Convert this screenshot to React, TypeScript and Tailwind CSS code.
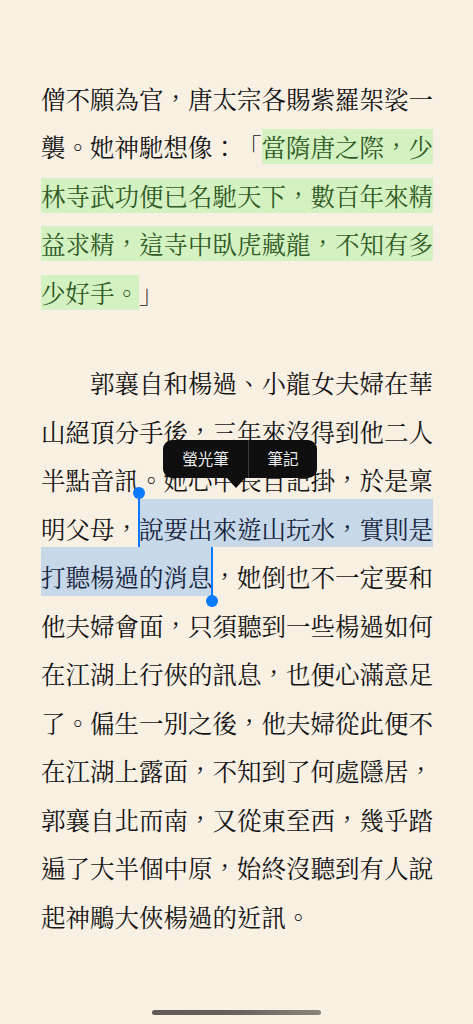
import React from "react";

const FONT = {
  fontFamily: '"Noto Serif CJK TC", "Noto Sans CJK TC", "Noto Sans CJK SC", serif',
};

function Line({ children, indent = false }: { children: React.ReactNode; indent?: boolean }) {
  return (
    <div className={"h-[48.5px] leading-[48.5px] whitespace-nowrap " + (indent ? "pl-[49px]" : "")}>
      {children}
    </div>
  );
}

function G({ children }: { children: React.ReactNode }) {
  return <span className="bg-[#d4f2c1] text-[#2f5a25]">{children}</span>;
}

export default function App() {
  return (
    <div
      lang="zh-Hant"
      className="relative w-full h-[1024px] overflow-hidden bg-[#f9f0e4] text-[#141414] text-[24.5px] [text-spacing-trim:space-all] [font-kerning:none]"
      style={FONT}
    >
      <div className="pl-[41px] pt-[74.5px] w-[433px]">
        <div>
          <Line>僧不願為官，唐太宗各賜紫羅架裟一</Line>
          <Line>
            襲。她神馳想像：「<G>當隋唐之際，少</G>
          </Line>
          <Line>
            <G>林寺武功便已名馳天下，數百年來精</G>
          </Line>
          <Line>
            <G>益求精，這寺中臥虎藏龍，不知有多</G>
          </Line>
          <Line>
            <G>少好手。</G>」
          </Line>
        </div>

        <div className="mt-[42.4px]">
          <Line indent>郭襄自和楊過、小龍女夫婦在華</Line>
          <Line>山絕頂分手後，三年來沒得到他二人</Line>
          <Line>半點音訊。她心中長自記掛，於是稟</Line>
          <Line>
            明父母，
            <span className="relative bg-[#c7d8e9] text-[#16243d] pt-[12px] pb-[1.5px]">
              說要出來遊山玩水，實則是
              <span className="absolute left-[-1.5px] top-[-5.5px] w-[2px] h-[54.5px] bg-[#0a7bff]" />
              <span className="absolute left-[-6.5px] top-[-11.5px] w-[12px] h-[12px] rounded-full bg-[#0a7bff]" />
            </span>
          </Line>
          <Line>
            <span className="relative bg-[#c7d8e9] text-[#16243d] pt-[12px] pb-[1.5px]">
              打聽楊過的消息
              <span className="absolute right-[0px] top-[0px] w-[2px] h-[51.5px] bg-[#0a7bff]" />
              <span className="absolute right-[-5px] top-[47.5px] w-[12px] h-[12px] rounded-full bg-[#0a7bff]" />
            </span>
            ，她倒也不一定要和
          </Line>
          <Line>他夫婦會面，只須聽到一些楊過如何</Line>
          <Line>在江湖上行俠的訊息，也便心滿意足</Line>
          <Line>了。偏生一別之後，他夫婦從此便不</Line>
          <Line>在江湖上露面，不知到了何處隱居，</Line>
          <Line>郭襄自北而南，又從東至西，幾乎踏</Line>
          <Line>遍了大半個中原，始終沒聽到有人說</Line>
          <Line>起神鵰大俠楊過的近訊。</Line>
        </div>
      </div>

      {/* Context menu */}
      <div className="absolute left-[163px] top-[440px] w-[154px] h-[38px]">
        <div
          className="flex h-full rounded-[9px] bg-[#0f0f0f] text-[#ececec] text-[15.5px] leading-none"
          style={{ fontFamily: '"Noto Sans CJK TC", "Noto Sans", sans-serif' }}
        >
          <div className="flex w-[86px] items-center justify-center border-r border-[#3c3c3c]">螢光筆</div>
          <div className="flex flex-1 items-center justify-center">筆記</div>
        </div>
        <svg className="absolute left-[63px] top-[37px]" width="20" height="12" viewBox="0 0 20 12">
          <polygon points="0,0 20,0 10,11" fill="#0f0f0f" />
        </svg>
      </div>

      {/* Home indicator */}
      <div className="absolute left-[152px] top-[1010px] w-[169px] h-[5px] rounded-full bg-gradient-to-r from-[#5f5b55] via-[#67625b] to-[#8a857c]" />
    </div>
  );
}
